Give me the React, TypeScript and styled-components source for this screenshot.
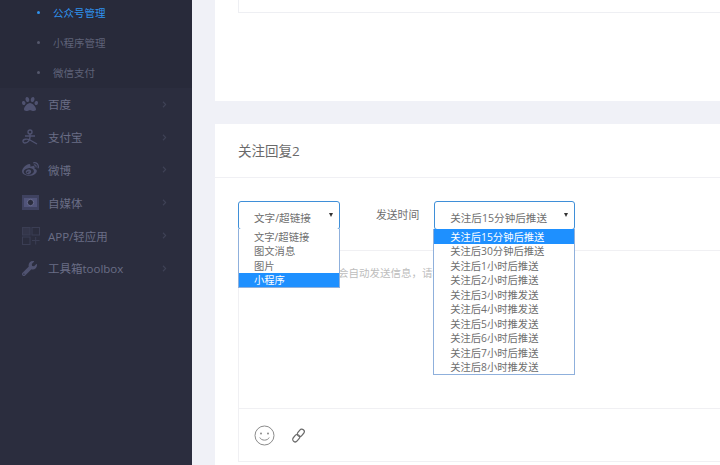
import React from "react";
import styled, { createGlobalStyle } from "styled-components";
import { FaPaw, FaWeibo, FaWrench, FaChevronRight } from "react-icons/fa";

const Global = createGlobalStyle`
  html, body { margin: 0; height: 100%; overflow: hidden; background: #f0f1f7; }
  #root { height: 100%; }
  * { box-sizing: border-box; }
`;

const Page = styled.div`
  display: flex;
  width: 720px;
  height: 465px;
  overflow: hidden;
  font-family: "Open Sans", "Noto Sans CJK SC", sans-serif;
  background: #f0f1f7;
`;
const Sidebar = styled.aside`
  flex: 0 0 192px;
  background: #2b2d3e;
`;
const SubList = styled.ul`
  list-style: none;
  margin: -3px 0 0;
  padding: 0 0 1px;
  background: #282a3a;
`;
const SubItem = styled.li<{ $active?: boolean }>`
  display: flex;
  align-items: center;
  height: 30px;
  padding-left: 37px;
  gap: 13px;
  font-size: 10.5px;
  color: ${(p) => (p.$active ? "#2f93ef" : "#5f6278")};
  &::before {
    content: "";
    width: 3px;
    height: 3px;
    border-radius: 50%;
    background: ${(p) => (p.$active ? "#2f93ef" : "#55586c")};
  }
`;
const Item = styled.div`
  display: flex;
  align-items: center;
  height: 32.8px;
  padding: 0 25px 0 22px;
  color: #6a6d86;
  font-size: 11.5px;
`;
const IconSlot = styled.span`
  flex: 0 0 26px;
  display: flex;
  align-items: center;
  color: #4f5270;
`;
const Label = styled.span`
  flex: 1;
`;
const Chevron = styled(FaChevronRight)`
  width: 5px;
  height: 7px;
  color: #3f4256;
`;
const Main = styled.main`
  flex: 1;
  min-width: 0;
  padding-left: 23px;
  display: flex;
  flex-direction: column;
  gap: 23px;
`;
const TopCard = styled.section`
  flex: 0 0 101px;
  background: #fff;
  padding-left: 23px;
`;
const TopBox = styled.div`
  height: 13px;
  border: 1px solid #eeeff3;
  border-top: 0;
  border-right: 0;
`;
const Card = styled.section`
  flex: 1;
  background: #fff;
  min-height: 0;
`;
const CardHead = styled.h2`
  margin: 0;
  height: 54px;
  padding: 0 0 2px 23px;
  display: flex;
  align-items: center;
  font-size: 13.5px;
  font-weight: 400;
  color: #6a6a6a;
  border-bottom: 1px solid #f0f0f4;
`;
const FormRow = styled.div`
  display: flex;
  align-items: flex-start;
  padding: 23px 0 0 23px;
  height: 72px;
`;
const SelectWrap = styled.div<{ $w: number }>`
  position: relative;
  width: ${(p) => p.$w}px;
  z-index: 2;
`;
const SelectBox = styled.div`
  height: 29px;
  border: 1px solid #3f8fd8;
  border-radius: 3px;
  display: flex;
  align-items: center;
  padding: 3px 0 0 15px;
  font-size: 10.6px;
  color: #6e6e6e;
  &::after {
    content: "";
    position: absolute;
    right: 7px;
    top: 12px;
    border-left: 2.5px solid transparent;
    border-right: 2.5px solid transparent;
    border-top: 4px solid #333;
  }
`;
const Options = styled.ul<{ $left: number }>`
  position: absolute;
  left: ${(p) => p.$left}px;
  right: 0;
  top: 28px;
  margin: 0;
  padding: 0;
  list-style: none;
  background: #fff;
  border: 1px solid #8fb0dc;
  border-top-width: 0;
`;
const Option = styled.li<{ $on?: boolean; $pad: number }>`
  height: 14.5px;
  line-height: 14.5px;
  padding: 0.5px 0 0 ${(p) => p.$pad}px;
  font-size: 10.3px;
  white-space: nowrap;
  color: ${(p) => (p.$on ? "#fff" : "#6e6e6e")};
  background: ${(p) => (p.$on ? "#1e90ff" : "transparent")};
`;
const FieldLabel = styled.span`
  margin: 0 15px 0 36px;
  padding-top: 6px;
  font-size: 10.8px;
  color: #6e6e6e;
  line-height: 15px;
`;
const Editor = styled.div`
  margin-left: 23px;
  height: 212px;
  border: 1px solid #f0f0f3;
  border-right: 0;
  display: flex;
  flex-direction: column;
`;
const EditArea = styled.div`
  flex: 0 0 158px;
  padding: 14px 0 0 15px;
  font-size: 10.5px;
  color: #bdbdbd;
  border-bottom: 1px solid #f0f0f3;
  white-space: nowrap;
`;
const Tools = styled.div`
  display: flex;
  align-items: center;
  gap: 16px;
  padding: 0 0 0 15px;
  flex: 1;
`;

const Alipay = () => (
  <svg width="18" height="16" viewBox="0 0 18 16" fill="none" stroke="currentColor" strokeWidth="1.4">
    <circle cx="8" cy="3" r="2" />
    <path d="M3 7h10M8 5v3c0 3-2 6-5 6-1.500 0-2-1-2-2 0-2 4-2.500 7-1l7 4" />
  </svg>
);
const Media = () => (
  <svg width="17" height="15" viewBox="0 0 17 15">
    <rect x="0" y="0" width="17" height="15" fill="#3f4260" />
    <rect x="2" y="3" width="13" height="9" fill="#51547a" />
    <circle cx="8.500" cy="7.500" r="3.200" fill="#2b2d3e" stroke="#6a6d90" />
  </svg>
);
const Grid = () => (
  <svg width="18" height="18" viewBox="0 0 18 18" fill="none" stroke="#3b3e54" strokeWidth="1">
    <rect x="0.500" y="0.500" width="7.500" height="7.500" fill="#34364a" />
    <rect x="10" y="0.500" width="7.500" height="7.500" />
    <rect x="0.500" y="10" width="7.500" height="7.500" />
    <path d="M10 13.500h7.500M13.700 10v7.500" />
  </svg>
);
const Smile = () => (
  <svg width="21" height="21" viewBox="0 0 21 21" fill="none" stroke="#8b8b8b" strokeWidth="1">
    <circle cx="10.500" cy="10.500" r="9.500" />
    <circle cx="7" cy="8.500" r="1" fill="#8b8b8b" stroke="none" />
    <circle cx="14" cy="8.500" r="1" fill="#8b8b8b" stroke="none" />
    <path d="M5.800 12.500c1.500 3.500 7.900 3.500 9.400 0" />
  </svg>
);
const LinkIcon = () => (
  <svg width="15" height="15" viewBox="0 0 15 15" fill="none" stroke="#6a6a6a" strokeWidth="1.200">
    <rect x="7.300" y="0.800" width="5" height="8" rx="2.500" transform="rotate(40 9.800 4.800)" />
    <rect x="2.700" y="6.200" width="5" height="8" rx="2.500" transform="rotate(40 5.200 10.200)" />
  </svg>
);

const nav: [React.ReactNode, string][] = [
  [<FaPaw size={16} />, "百度"],
  [<Alipay />, "支付宝"],
  [<FaWeibo size={17} />, "微博"],
  [<Media />, "自媒体"],
  [<Grid />, "APP/轻应用"],
  [<FaWrench size={15} />, "工具箱toolbox"],
];
const typeOptions = ["文字/超链接", "图文消息", "图片", "小程序"];
const timeOptions = [
  "关注后15分钟后推送",
  "关注后30分钟后推送",
  "关注后1小时后推送",
  "关注后2小时后推送",
  "关注后3小时推发送",
  "关注后4小时推发送",
  "关注后5小时推发送",
  "关注后6小时后推送",
  "关注后7小时后推送",
  "关注后8小时推发送",
];

export default function App() {
  return (
    <Page>
      <Global />
      <Sidebar>
        <SubList>
          <SubItem $active>公众号管理</SubItem>
          <SubItem>小程序管理</SubItem>
          <SubItem>微信支付</SubItem>
        </SubList>
        {nav.map(([icon, text]) => (
          <Item key={text}>
            <IconSlot>{icon}</IconSlot>
            <Label>{text}</Label>
            <Chevron />
          </Item>
        ))}
      </Sidebar>
      <Main>
        <TopCard>
          <TopBox />
        </TopCard>
        <Card>
          <CardHead>关注回复2</CardHead>
          <FormRow>
            <SelectWrap $w={102}>
              <SelectBox>文字/超链接</SelectBox>
              <Options $left={0}>
                {typeOptions.map((o) => (
                  <Option key={o} $pad={15} $on={o === "小程序"}>{o}</Option>
                ))}
              </Options>
            </SelectWrap>
            <FieldLabel>发送时间</FieldLabel>
            <SelectWrap $w={141}>
              <SelectBox>关注后15分钟后推送</SelectBox>
              <Options $left={-1}>
                {timeOptions.map((o, i) => (
                  <Option key={o} $pad={16} $on={i === 0}>{o}</Option>
                ))}
              </Options>
            </SelectWrap>
          </FormRow>
          <Editor>
            <EditArea>粉丝关注后公众号会自动发送信息，请填写内容</EditArea>
            <Tools>
              <Smile />
              <LinkIcon />
            </Tools>
          </Editor>
        </Card>
      </Main>
    </Page>
  );
}
